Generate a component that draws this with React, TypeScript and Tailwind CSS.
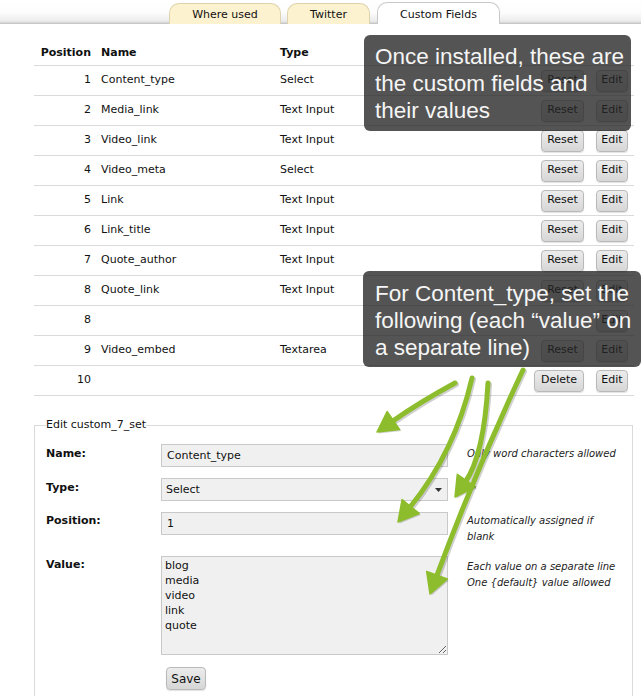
import React from "react";

type Pt = [number, number];

const rows: { pos: string; name: string; type: string; first: "Reset" | "Delete" | null }[] = [
  { pos: "1", name: "Content_type", type: "Select", first: "Reset" },
  { pos: "2", name: "Media_link", type: "Text Input", first: "Reset" },
  { pos: "3", name: "Video_link", type: "Text Input", first: "Reset" },
  { pos: "4", name: "Video_meta", type: "Select", first: "Reset" },
  { pos: "5", name: "Link", type: "Text Input", first: "Reset" },
  { pos: "6", name: "Link_title", type: "Text Input", first: "Reset" },
  { pos: "7", name: "Quote_author", type: "Text Input", first: "Reset" },
  { pos: "8", name: "Quote_link", type: "Text Input", first: "Reset" },
  { pos: "8", name: "", type: "", first: null },
  { pos: "9", name: "Video_embed", type: "Textarea", first: "Reset" },
  { pos: "10", name: "", type: "", first: "Delete" },
];

const arrows: { s: Pt; c: Pt; t: Pt }[] = [
  { s: [455, 383], c: [420, 402], t: [377, 432] },
  { s: [472, 378], c: [455, 452], t: [398, 522] },
  { s: [488, 383], c: [484, 455], t: [455, 497] },
  { s: [523, 370], c: [476, 470], t: [430, 594] },
];

function Arrow({ s, c, t }: { s: Pt; c: Pt; t: Pt }) {
  const dx = t[0] - c[0];
  const dy = t[1] - c[1];
  const len = Math.hypot(dx, dy);
  const ux = dx / len;
  const uy = dy / len;
  const L = 20;
  const W = 11;
  const bx = t[0] - ux * L;
  const by = t[1] - uy * L;
  const px = -uy;
  const py = ux;
  const head = `${t[0]},${t[1]} ${bx + px * W},${by + py * W} ${bx - px * W},${by - py * W}`;
  const shaft = `M${s[0]} ${s[1]} Q${c[0]} ${c[1]} ${bx + ux * 2} ${by + uy * 2}`;
  return (
    <g>
      <g transform="translate(1.5 1.5)" opacity="0.18">
        <path d={shaft} fill="none" stroke="#000" strokeWidth="5" strokeLinecap="round" />
        <polygon points={head} fill="#000" />
      </g>
      <path d={shaft} fill="none" stroke="#8dbd2c" strokeWidth="5" strokeLinecap="round" />
      <polygon points={head} fill="#8dbd2c" stroke="#8dbd2c" strokeWidth="1.5" strokeLinejoin="round" />
    </g>
  );
}

function Btn({ children, w }: { children: React.ReactNode; w: string }) {
  return (
    <div
      className={`${w} h-[22px] flex items-center justify-center rounded-[4px] border border-[#b9b9b9] bg-[linear-gradient(to_bottom,#ececec,#d6d6d6)] text-[11px] text-[#111] shadow-[0_1px_1px_rgba(0,0,0,0.12)]`}
    >
      {children}
    </div>
  );
}

export default function App() {
  return (
    <div
      className="relative w-[641px] h-[696px] overflow-hidden bg-white text-[#111]"
      style={{ fontFamily: '"DejaVu Sans", Verdana, sans-serif' }}
    >
      {/* Tab bar */}
      <div className="h-[24px] border-b border-[#c6c6c6] bg-[linear-gradient(to_bottom,#ffffff_0%,#fcfcfc_55%,#ececec_90%,#d6d6d6_100%)] flex items-end pl-[169px] gap-[6px] text-[11px]">
        <div className="w-[112px] h-[21px] -mb-px rounded-t-[10px] border border-b-0 border-[#ddd3ad] bg-[#fcf2cf] flex justify-center pt-[4px] leading-[14px]">
          Where used
        </div>
        <div className="w-[83px] h-[21px] -mb-px rounded-t-[10px] border border-b-0 border-[#ddd3ad] bg-[#fcf2cf] flex justify-center pt-[4px] leading-[14px]">
          Twitter
        </div>
        <div className="ml-[1px] w-[123px] h-[22px] -mb-px rounded-t-[10px] border border-b-0 border-[#c8c8c8] bg-white flex justify-center pt-[5px] leading-[14px] relative z-10">
          Custom Fields
        </div>
      </div>

      {/* Table */}
      <div className="mt-[18px] ml-[34px] w-[600px] text-[11px]">
        <div className="h-[24px] flex items-center border-b border-[#dadada] font-bold">
          <div className="w-[57px] text-right">Position</div>
          <div className="ml-[10px] w-[179px]">Name</div>
          <div className="flex-1">Type</div>
        </div>
        {rows.map((r, i) => (
          <div key={i} className="h-[30px] flex items-center border-b border-[#dadada]">
            <div className="w-[57px] text-right">{r.pos}</div>
            <div className="ml-[10px] w-[179px]">{r.name}</div>
            <div className="flex-1">{r.type}</div>
            <div className="flex items-center gap-[12px] pr-[6px]">
              <div className="w-[50px] flex justify-end">
                {r.first === "Reset" && <Btn w="w-[43px]">Reset</Btn>}
                {r.first === "Delete" && <Btn w="w-[50px]">Delete</Btn>}
              </div>
              <Btn w="w-[32px]">Edit</Btn>
            </div>
          </div>
        ))}
      </div>

      {/* Fieldset */}
      <fieldset className="mt-[22px] ml-[34px] w-[599px] border border-[#dadada] px-[11px] pt-[12px] pb-[40px] text-[11px]">
        <legend className="px-0 leading-[14px]">Edit custom_7_set</legend>

        <div className="flex">
          <div className="w-[115px] font-bold pt-[3px] leading-[14px]">Name:</div>
          <div className="w-[287px] h-[23px] border border-[#c9c9c9] bg-[#f0f0f0] flex items-center pl-[5px] pt-[1px]">Content_type</div>
          <div className="ml-[19px] pt-[2px] italic text-[10px] leading-[16px] text-[#222]">Only word characters allowed</div>
        </div>

        <div className="flex mt-[11px]">
          <div className="w-[115px] font-bold pt-[3px] leading-[14px]">Type:</div>
          <div className="w-[287px] h-[23px] border border-[#c9c9c9] bg-[#f0f0f0] flex items-center pl-[4px] pr-[5px] justify-between pt-[1px]">
            <span>Select</span>
            <svg width="7" height="4" viewBox="0 0 7 4">
              <polygon points="0,0 7,0 3.5,4" fill="#333" />
            </svg>
          </div>
        </div>

        <div className="flex mt-[11px]">
          <div className="w-[115px] font-bold pt-[2px] leading-[14px]">Position:</div>
          <div className="w-[287px] h-[23px] border border-[#c9c9c9] bg-[#f0f0f0] flex items-center pl-[5px] pt-[1px]">1</div>
          <div className="ml-[19px] pt-[1px] italic text-[10px] leading-[16px] text-[#222]">
            Automatically assigned if
            <br />
            blank
          </div>
        </div>

        <div className="flex mt-[11px]">
          <div className="w-[115px] font-bold pt-[2px] leading-[14px]">Value:</div>
          <textarea
            readOnly
            defaultValue={"blog\nmedia\nvideo\nlink\nquote"}
            className="block w-[287px] h-[99px] border border-[#c9c9c9] bg-[#f0f0f0] px-[3px] pt-[1px] text-[11px] leading-[15px] outline-none"
            style={{ fontFamily: '"DejaVu Sans", Verdana, sans-serif' }}
          />
          <div className="ml-[19px] pt-[3px] italic text-[10px] leading-[16px] text-[#222]">
            Each value on a separate line
            <br />
            One {"{default}"} value allowed
          </div>
        </div>

        <div className="mt-[12px] ml-[120px]">
          <div className="w-[40px] h-[23px] flex items-center justify-center rounded-[4px] border border-[#b9b9b9] bg-[linear-gradient(to_bottom,#ececec,#d6d6d6)] text-[12px] shadow-[0_1px_1px_rgba(0,0,0,0.12)]">
            Save
          </div>
        </div>
      </fieldset>

      {/* Overlays */}
      <div
        className="absolute left-[364px] top-[35px] w-[267px] h-[96px] rounded-[6px] bg-[rgba(36,36,36,0.78)] text-[#f5f5f5] pl-[11px] pt-[8px] text-[22.5px] leading-[27px]"
        style={{ fontFamily: '"Liberation Sans", Arial, sans-serif' }}
      >
        Once installed, these are
        <br />
        the custom fields and
        <br />
        their values
      </div>
      <div
        className="absolute left-[363px] top-[271px] w-[278px] h-[96px] rounded-[6px] bg-[rgba(36,36,36,0.78)] text-[#f5f5f5] pl-[12px] pt-[9px] text-[22.5px] leading-[27px]"
        style={{ fontFamily: '"Liberation Sans", Arial, sans-serif' }}
      >
        For Content_type, set the
        <br />
        following (each “value” on
        <br />a separate line)
      </div>

      {/* Arrows */}
      <svg className="absolute left-0 top-0 pointer-events-none" width="641" height="696" viewBox="0 0 641 696">
        {arrows.map((a, i) => (
          <Arrow key={i} {...a} />
        ))}
      </svg>
    </div>
  );
}
